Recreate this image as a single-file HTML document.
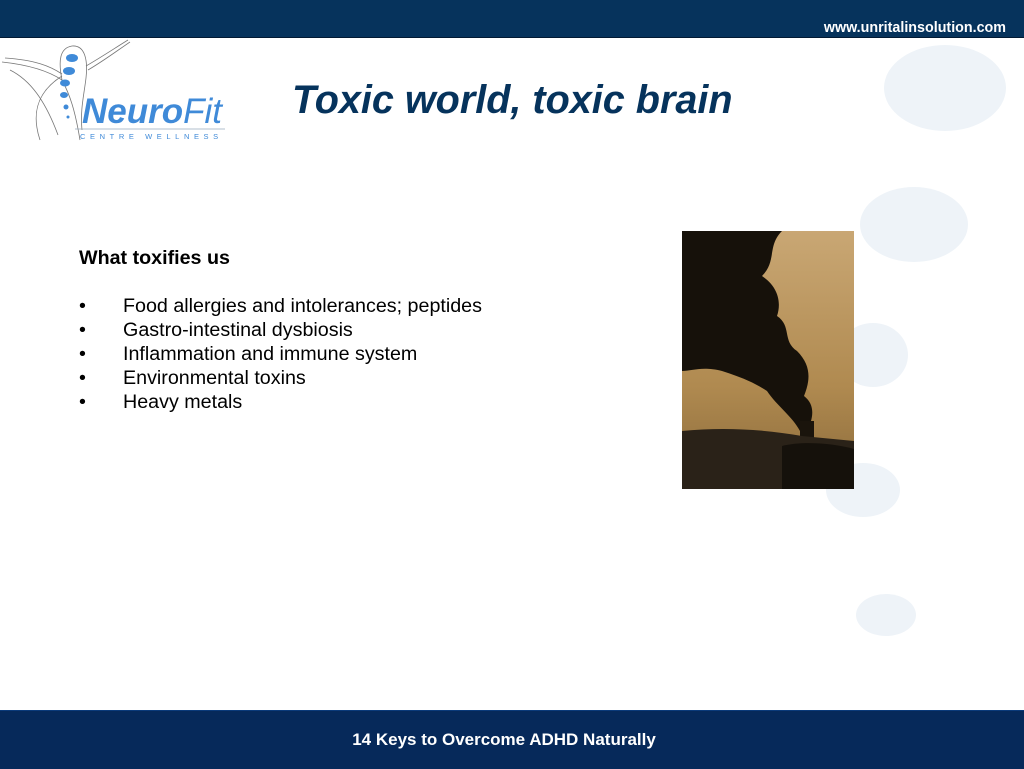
<!DOCTYPE html>
<html><head><meta charset="utf-8"><style>
html,body{margin:0;padding:0}
body{width:1024px;height:768px;position:relative;background:#fff;overflow:hidden;font-family:"Liberation Sans",Arial,sans-serif}
.top{position:absolute;left:0;top:0;width:1024px;height:37px;background:#06335c;border-bottom:1px solid #021a33}
.url{position:absolute;right:18px;top:20px;color:#fff;font-size:14.3px;font-weight:bold}
.bot{position:absolute;left:0;top:710px;width:1024px;height:58px;background:#06295a;border-top:1px solid #0a3a7a}
.bot div{position:absolute;left:0;right:16px;top:19px;text-align:center;color:#fff;font-weight:bold;font-size:17px}
.oval{position:absolute;background:#eef3f8;border-radius:50%}
h1{position:absolute;left:292px;top:78px;margin:0;font-size:39.6px;font-style:italic;font-weight:bold;color:#06335c;white-space:nowrap}
.txt{position:absolute;left:79px;top:246px;font-size:19.7px;color:#000;line-height:24px}
.txt b{display:block;margin-bottom:24px}
.li{position:relative;padding-left:44px;white-space:nowrap}
.li:before{content:"•";position:absolute;left:0}
</style></head><body>
<div class="top"><div class="url">www.unritalinsolution.com</div></div>
<div class="oval" style="left:884px;top:45px;width:122px;height:86px"></div>
<div class="oval" style="left:860px;top:187px;width:108px;height:75px"></div>
<div class="oval" style="left:838px;top:323px;width:70px;height:64px"></div>
<div class="oval" style="left:826px;top:463px;width:74px;height:54px"></div>
<div class="oval" style="left:856px;top:594px;width:60px;height:42px"></div>
<svg style="position:absolute;left:0;top:36px" width="240" height="110" viewBox="0 36 240 110">
<g fill="none" stroke="#777" stroke-width="0.8">
<path d="M2 62 C30 65 50 72 62 80 C70 95 75 110 80 140"/>
<path d="M5 58 C35 60 50 66 62 74"/>
<path d="M10 70 C30 80 45 100 58 135"/>
<path d="M62 80 C58 60 60 48 72 46 C85 45 88 60 86 78 C84 95 80 110 82 130"/>
<path d="M86 66 C100 58 115 48 128 40"/>
<path d="M88 70 C105 60 118 50 130 42"/>
<path d="M62 76 C40 90 30 110 40 140"/>
</g>
<g fill="#3f8ad8"><ellipse cx="72" cy="58" rx="6" ry="4"/><ellipse cx="69" cy="71" rx="6" ry="4"/><ellipse cx="65" cy="83" rx="5" ry="3.5"/><ellipse cx="64" cy="95" rx="4" ry="3"/><circle cx="66" cy="107" r="2.5"/><circle cx="68" cy="117" r="1.5"/></g>
<text x="82" y="123" font-family="Liberation Sans" font-style="italic" font-weight="bold" font-size="35" fill="#3f8ad8">Neuro<tspan font-weight="normal">Fit</tspan></text>
<line x1="75" y1="129" x2="225" y2="129" stroke="#9ab" stroke-width="0.8"/>
<text x="80" y="139" font-family="Liberation Sans" font-size="7.5" letter-spacing="4.6" fill="#3f8ad8">CENTRE WELLNESS</text>
</svg>
<h1>Toxic world, toxic brain</h1>
<div class="txt"><b>What toxifies us</b>
<div class="li">Food allergies and intolerances; peptides</div>
<div class="li">Gastro-intestinal dysbiosis</div>
<div class="li">Inflammation and immune system</div>
<div class="li">Environmental toxins</div>
<div class="li">Heavy metals</div></div>
<svg style="position:absolute;left:682px;top:231px" width="172" height="258" viewBox="0 0 172 258">
<defs><linearGradient id="g" x1="0" y1="0" x2="0" y2="1"><stop offset="0" stop-color="#c9a774"/><stop offset="0.6" stop-color="#b08a50"/><stop offset="1" stop-color="#8a6a3a"/></linearGradient></defs>
<rect width="172" height="258" fill="url(#g)"/>
<path d="M0 0 H100 C85 15 95 30 80 45 C95 55 100 70 95 85 C110 95 100 110 115 120 C130 135 128 150 122 165 C135 175 130 190 125 200 H118 C110 185 95 175 85 160 C70 150 55 145 40 140 C20 135 10 140 0 140 Z" fill="#16110a"/>
<rect x="118" y="190" width="14" height="30" fill="#1a140c"/>
<path d="M0 200 C40 196 80 198 120 205 L172 210 V258 H0 Z" fill="#2a2218"/>
<path d="M100 215 C120 210 150 212 172 218 V258 H100 Z" fill="#15110b"/>
</svg>
<div class="bot"><div>14 Keys to Overcome ADHD Naturally</div></div>
</body></html>
